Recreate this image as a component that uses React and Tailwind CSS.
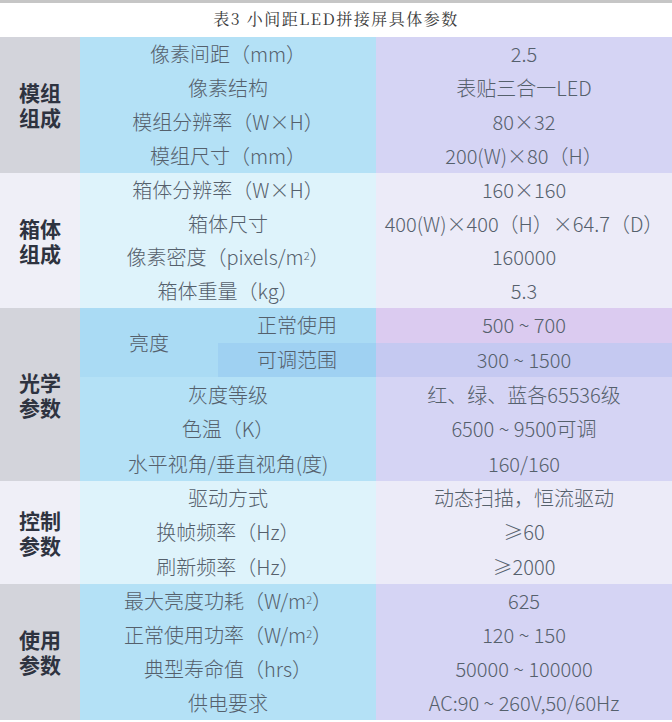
import React from "react";

const groups = [
  {
    label: ["模组", "组成"],
    dark: true,
    height: "h-[136px]",
    rows: [
      ["像素间距（mm）", "2.5"],
      ["像素结构", "表贴三合一LED"],
      ["模组分辨率（W×H）", "80×32"],
      ["模组尺寸（mm）", "200(W)×80（H）"],
    ],
  },
  {
    label: ["箱体", "组成"],
    dark: false,
    height: "h-[135px]",
    rows: [
      ["箱体分辨率（W×H）", "160×160"],
      ["箱体尺寸", "400(W)×400（H）×64.7（D）"],
      [
        <span>
          像素密度（pixels/m<sup className="text-[11px]">2</sup>）
        </span>,
        "160000",
      ],
      ["箱体重量（kg）", "5.3"],
    ],
  },
  {
    label: ["光学", "参数"],
    dark: true,
    height: "h-[173px]",
    brightness: true,
    rows: [
      ["灰度等级", "红、绿、蓝各65536级"],
      ["色温（K）", "6500 ~ 9500可调"],
      ["水平视角/垂直视角(度)", "160/160"],
    ],
  },
  {
    label: ["控制", "参数"],
    dark: false,
    height: "h-[103px]",
    rows: [
      ["驱动方式", "动态扫描，恒流驱动"],
      ["换帧频率（Hz）", "≥60"],
      ["刷新频率（Hz）", "≥2000"],
    ],
  },
  {
    label: ["使用", "参数"],
    dark: true,
    height: "h-[136px]",
    rows: [
      [
        <span>
          最大亮度功耗（W/m<sup className="text-[11px]">2</sup>）
        </span>,
        "625",
      ],
      [
        <span>
          正常使用功率（W/m<sup className="text-[11px]">2</sup>）
        </span>,
        "120 ~ 150",
      ],
      ["典型寿命值（hrs）", "50000 ~ 100000"],
      ["供电要求", "AC:90 ~ 260V,50/60Hz"],
    ],
  },
];

const Group = ({ group }) => {
  const midBg = group.dark ? "bg-[#b4e1f6]" : "bg-[#def3fb]";
  const rightBg = group.dark ? "bg-[#d5d4f4]" : "bg-[#ecebf8]";
  const leftBg = group.dark ? "bg-[#d3d4db]" : "bg-[#efeff7]";
  return (
    <div className={`flex ${group.height}`}>
      <div
        className={`w-[80px] ${leftBg} flex items-center justify-center text-center text-[21px] font-bold leading-[25px] text-[#2e3340]`}
      >
        <p>
          {group.label[0]}
          <br />
          {group.label[1]}
        </p>
      </div>
      <div className="flex-1 flex flex-col">
        {group.brightness && (
          <div className="flex flex-[2]">
            <div className="w-[296px] flex bg-[#aadbf4]">
              <div className="w-[138px] flex items-center justify-center">亮度</div>
              <div className="flex-1 flex flex-col">
                <div className="flex-1 flex items-center justify-center">正常使用</div>
                <div className="flex-1 flex items-center justify-center bg-[#9fd1f2]">可调范围</div>
              </div>
            </div>
            <div className="flex-1 flex flex-col">
              <div className="flex-1 flex items-center justify-center bg-[#dbcbf0]">500 ~ 700</div>
              <div className="flex-1 flex items-center justify-center bg-[#c5c9f1]">300 ~ 1500</div>
            </div>
          </div>
        )}
        {group.rows.map((row, i) => (
          <div key={i} className="flex flex-1">
            <div className={`w-[296px] ${midBg} flex items-center justify-center`}>{row[0]}</div>
            <div className={`flex-1 ${rightBg} flex items-center justify-center`}>{row[1]}</div>
          </div>
        ))}
      </div>
    </div>
  );
}

export default function App() {
  return (
    <div className="w-[672px] h-[722px] bg-white border-t-[3px] border-[#c6c6c6] font-['Liberation_Sans_Narrow','Noto_Sans_CJK_SC',sans-serif]">
      <div className="h-[30px] pt-[1px] flex items-center justify-center text-[16px] text-[#3a3a3a] font-['AR_PL_UKai_CN','Noto_Serif_CJK_SC','Noto_Sans_CJK_SC',serif] tracking-[1.5px]">
        表3 小间距LED拼接屏具体参数
      </div>
      <div className="h-[4px]" />
      <div className="text-[20px] text-[#55606c] font-light">
        {groups.map((g, i) => (
          <Group key={i} group={g} />
        ))}
      </div>
    </div>
  );
}
